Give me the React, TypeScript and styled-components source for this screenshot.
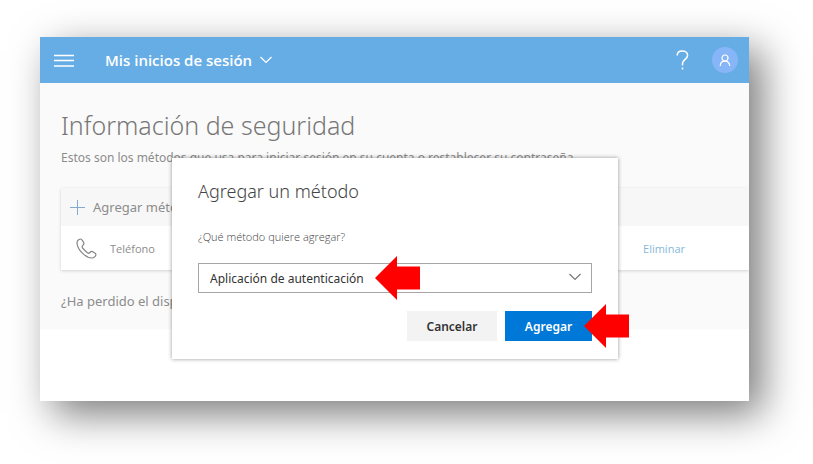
import React from "react";
import styled, { createGlobalStyle } from "styled-components";

const GlobalStyle = createGlobalStyle`
  *, *::before, *::after { box-sizing: border-box; }
  body {
    margin: 0;
    background: #fff;
    font-family: "Noto Sans", "Open Sans", sans-serif;
  }
  button, select { font-family: inherit; }
`;

const Page = styled.div`
  display: flex;
  min-height: 100vh;
  padding: 37px 64px 63px 40px;
`;

const AppWindow = styled.div`
  position: relative;
  flex: 1;
  min-width: 0;
  background: #fff;
  box-shadow: 13px 13px 38px rgba(0, 0, 0, 0.52);
`;

const Header = styled.header`
  display: flex;
  align-items: center;
  height: 46px;
  padding: 0 11px 0 14px;
  background: #66ade6;
  color: #fff;
`;

const IconButton = styled.button`
  display: flex;
  padding: 0;
  border: 0;
  background: none;
  color: inherit;
`;

const AppMenu = styled(IconButton)`
  align-items: center;
  gap: 8px;
  margin: 0 auto 0 31px;
  font-family: "Open Sans", "Noto Sans", sans-serif;
  font-size: 15px;
  line-height: 20px;
  font-weight: 600;
`;

const Avatar = styled(IconButton)`
  align-items: center;
  justify-content: center;
  width: 26px;
  height: 26px;
  margin-left: 23px;
  border-radius: 50%;
  background: #86b6f8;
`;

const Content = styled.main`
  height: 246px;
  padding: 24px 0 0 21px;
  overflow: hidden;
  background: #fafafa;
  color: #8c8c8c;
`;

const Title = styled.h1`
  margin: 0;
  font-size: 25px;
  line-height: 36px;
  font-weight: 300;
  color: #777;
  white-space: nowrap;
`;

const Intro = styled.p`
  margin: 6px 0 0;
  font-size: 12px;
  line-height: 18px;
  white-space: nowrap;
`;

const Methods = styled.section`
  margin-top: 21px;
  box-shadow: 0 1px 3px rgba(0, 0, 0, 0.16);
`;

const AddMethod = styled.button`
  display: flex;
  align-items: center;
  gap: 8px;
  width: 100%;
  height: 38px;
  padding: 0 9px;
  border: 0;
  background: #f7f7f7;
  color: #8c8c8c;
  font-size: 13px;
`;

const MethodRow = styled.div`
  display: flex;
  align-items: center;
  height: 44px;
  padding: 0 64px 0 15px;
  background: #fff;
  font-family: "Open Sans", "Noto Sans", sans-serif;
  font-size: 11px;
`;

const MethodName = styled.span`
  margin: 0 auto 0 13px;
`;

const RemoveLink = styled.a`
  color: #86b8da;
  text-decoration: none;
`;

const LostDevice = styled.p`
  margin: 21px 0 0;
  font-size: 13px;
  line-height: 20px;
`;

const Dialog = styled.form`
  position: absolute;
  top: 121px;
  left: 132px;
  right: 131px;
  padding: 20px 26px 18px;
  background: #fff;
  color: #333;
  box-shadow: 0 0 4px rgba(0, 0, 0, 0.42);
`;

const DialogTitle = styled.h2`
  margin: 0;
  font-size: 18px;
  line-height: 26px;
  font-weight: 300;
  color: #444;
`;

const FieldLabel = styled.label`
  display: block;
  margin-top: 24px;
  font-family: "Open Sans", "Noto Sans", sans-serif;
  font-size: 11px;
  line-height: 18px;
  font-weight: 300;
  color: #444;
`;

const SelectField = styled.div`
  position: relative;
  margin-top: 17px;
`;

const Select = styled.select`
  display: block;
  appearance: none;
  width: 100%;
  height: 30px;
  padding: 0 32px 0 11px;
  border: 1px solid #a6a6a6;
  border-radius: 0;
  background: #fff;
  color: #333;
  font-size: 12px;
`;

const SelectChevron = styled.span`
  position: absolute;
  top: 10px;
  right: 11px;
  display: flex;
  color: #777;
  pointer-events: none;
`;

const Actions = styled.div`
  display: flex;
  justify-content: flex-end;
  gap: 8px;
  margin-top: 18px;
`;

const ActionSlot = styled.div`
  position: relative;
`;

const ActionButton = styled.button<{ $primary?: boolean }>`
  display: block;
  width: ${(p) => (p.$primary ? "87px" : "90px")};
  height: 30px;
  padding: 0;
  border: 0;
  background: ${(p) => (p.$primary ? "#0078d7" : "#f3f3f3")};
  color: ${(p) => (p.$primary ? "#fff" : "#333")};
  font-size: 12px;
  font-weight: 600;
`;

const Pointer = styled.span<{ $left: number }>`
  position: absolute;
  top: -7px;
  left: ${(p) => p.$left}px;
  display: flex;
  color: #fe0000;
  pointer-events: none;
`;

const Arrow = () => (
  <svg width="45" height="44" viewBox="0 0 45 44" fill="currentColor" aria-hidden="true">
    <path d="M0 22 22 0V10.500H45V33.500H22V44Z" />
  </svg>
);

const Chevron = () => (
  <svg width="12" height="8" viewBox="0 0 12 8" fill="none" stroke="currentColor" strokeWidth="1.200" aria-hidden="true">
    <path d="M.5 1 6 6.500 11.500 1" />
  </svg>
);

export default function App() {
  return (
    <Page>
      <GlobalStyle />
      <AppWindow>
        <Header>
          <IconButton type="button" aria-label="Menú">
            <svg width="20" height="14" viewBox="0 0 20 14" stroke="currentColor" strokeWidth="1.400" aria-hidden="true">
              <path d="M0 2.500H20M0 7.500H20M0 13H20" />
            </svg>
          </IconButton>
          <AppMenu type="button">
            Mis inicios de sesión
            <Chevron />
          </AppMenu>
          <IconButton type="button" aria-label="Ayuda">
            <svg width="13" height="21" viewBox="0 0 13 21" fill="none" stroke="currentColor" strokeWidth="1.500" aria-hidden="true">
              <path d="M1.200 5.500C1.200 2.800 3.200 1 6.200 1S11.600 2.700 11.600 5.200C11.600 9 6.500 9.700 6.500 13.500V15.500M6.500 17.500V19.500" />
            </svg>
          </IconButton>
          <Avatar type="button" aria-label="Cuenta">
            <svg width="12" height="13" viewBox="0 0 12 13" fill="none" stroke="currentColor" strokeWidth="1.200" aria-hidden="true">
              <circle cx="6" cy="4" r="3" />
              <path d="M1.300 12C1.300 9 3.300 7.200 6 7.200S10.700 9 10.700 12" />
            </svg>
          </Avatar>
        </Header>
        <Content>
          <Title>Información de seguridad</Title>
          <Intro>
            Estos son los métodos que usa para iniciar sesión en su cuenta o restablecer su contraseña.
          </Intro>
          <Methods>
            <AddMethod type="button">
              <svg width="15" height="15" viewBox="0 0 15 15" stroke="#82a9cf" aria-hidden="true">
                <path d="M0 7.500H15M7.500 0V15" />
              </svg>
              Agregar método
            </AddMethod>
            <MethodRow>
              <svg width="21" height="21" viewBox="0 0 21 21" fill="none" stroke="#858585" strokeWidth="1.200" strokeLinejoin="round" aria-hidden="true">
                <path d="M5.200 1.200C3.900.5 1 2.200 1 4.700C1 8.600 3.900 12.700 6.400 15.100C9 17.700 12.400 20 15.800 20C18.200 20 20.300 17.600 19.800 16.100C19.600 15.400 16.600 13.500 15.500 13.400C14.500 13.300 13.700 15.400 12.500 15.300C11.200 15.100 6.300 10.200 6.100 8.800C6 7.700 8 6.700 7.900 5.600C7.800 4.300 6 1.600 5.200 1.200Z" />
              </svg>
              <MethodName>Teléfono</MethodName>
              <RemoveLink href="#eliminar">Eliminar</RemoveLink>
            </MethodRow>
          </Methods>
          <LostDevice>¿Ha perdido el dispositivo?</LostDevice>
        </Content>
        <Dialog role="dialog" aria-labelledby="dialog-title" onSubmit={(e) => e.preventDefault()}>
          <DialogTitle id="dialog-title">Agregar un método</DialogTitle>
          <FieldLabel htmlFor="method">¿Qué método quiere agregar?</FieldLabel>
          <SelectField>
            <Select id="method" defaultValue="app">
              <option value="app">Aplicación de autenticación</option>
            </Select>
            <SelectChevron>
              <Chevron />
            </SelectChevron>
            <Pointer $left={177}>
              <Arrow />
            </Pointer>
          </SelectField>
          <Actions>
            <ActionButton type="button">Cancelar</ActionButton>
            <ActionSlot>
              <ActionButton type="submit" $primary>
                Agregar
              </ActionButton>
              <Pointer $left={79}>
                <Arrow />
              </Pointer>
            </ActionSlot>
          </Actions>
        </Dialog>
      </AppWindow>
    </Page>
  );
}
